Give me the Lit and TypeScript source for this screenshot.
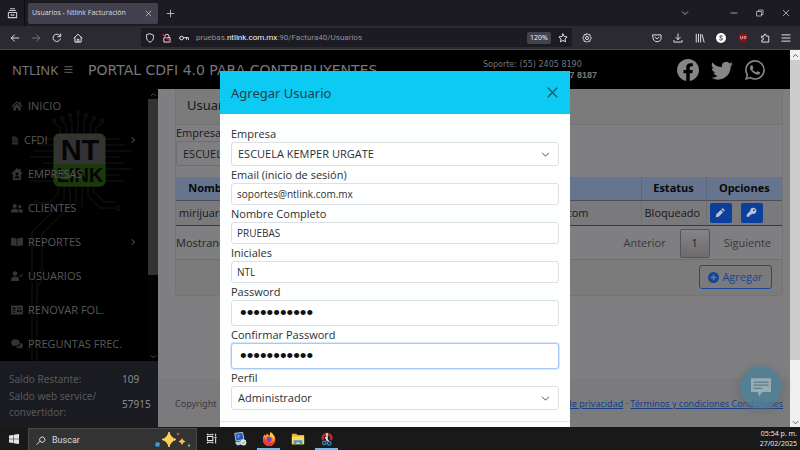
import { LitElement, html, css, svg, nothing } from "lit";
import { customElement, property } from "lit/decorators.js";

const stroke = (d: string, box = 16) =>
  html`<svg viewBox="0 0 ${box} ${box}" fill="none" stroke="currentColor" stroke-width="1.5" stroke-linecap="round" stroke-linejoin="round" aria-hidden="true"><path d=${d}></path></svg>`;
const solid = (d: string, box = "0 0 16 16") =>
  html`<svg viewBox=${box} fill="currentColor" fill-rule="evenodd" aria-hidden="true"><path d=${d}></path></svg>`;

const FACEBOOK = "M16 8.049c0-4.446-3.582-8.05-8-8.05C3.58 0-.002 3.603-.002 8.05c0 4.017 2.926 7.347 6.75 7.951v-5.625h-2.03V8.05H6.75V6.275c0-2.017 1.195-3.131 3.022-3.131.876 0 1.791.157 1.791.157v1.98h-1.009c-.993 0-1.303.621-1.303 1.258v1.51h2.218l-.354 2.326H9.25V16c3.824-.604 6.75-3.934 6.75-7.951z";
const TWITTER = "M5.026 15c6.038 0 9.341-5.003 9.341-9.334 0-.14 0-.282-.006-.422A6.685 6.685 0 0 0 16 3.542a6.658 6.658 0 0 1-1.889.518 3.301 3.301 0 0 0 1.447-1.817 6.533 6.533 0 0 1-2.087.793A3.286 3.286 0 0 0 7.875 6.03a9.325 9.325 0 0 1-6.767-3.429 3.289 3.289 0 0 0 1.018 4.382A3.323 3.323 0 0 1 .64 6.575v.045a3.288 3.288 0 0 0 2.632 3.218 3.203 3.203 0 0 1-.865.115 3.23 3.23 0 0 1-.614-.057 3.283 3.283 0 0 0 3.067 2.277A6.588 6.588 0 0 1 .78 13.58a6.32 6.32 0 0 1-.78-.045A9.344 9.344 0 0 0 5.026 15z";
const WHATSAPP = "M13.601 2.326A7.854 7.854 0 0 0 7.994 0C3.627 0 .068 3.558.064 7.926c0 1.399.366 2.76 1.057 3.965L0 16l4.204-1.102a7.933 7.933 0 0 0 3.79.965h.004c4.368 0 7.926-3.558 7.93-7.93A7.898 7.898 0 0 0 13.6 2.326zM7.994 14.521a6.573 6.573 0 0 1-3.356-.92l-.24-.144-2.494.654.666-2.433-.156-.251a6.56 6.56 0 0 1-1.007-3.505c0-3.626 2.957-6.584 6.591-6.584a6.56 6.56 0 0 1 4.66 1.931 6.557 6.557 0 0 1 1.928 4.66c-.004 3.639-2.961 6.592-6.592 6.592zm3.615-4.934c-.197-.099-1.17-.578-1.353-.646-.182-.065-.315-.099-.445.099-.133.197-.513.646-.627.775-.114.133-.232.148-.43.05-.197-.1-.836-.308-1.592-.985-.59-.525-.985-1.175-1.103-1.372-.114-.198-.011-.304.088-.403.087-.088.197-.232.296-.346.1-.114.133-.198.198-.33.065-.134.034-.248-.015-.347-.05-.099-.445-1.076-.612-1.47-.16-.389-.323-.335-.445-.34-.114-.007-.247-.007-.38-.007a.729.729 0 0 0-.529.247c-.182.198-.691.677-.691 1.654 0 .977.71 1.916.81 2.049.098.133 1.394 2.132 3.383 2.992.47.205.84.326 1.129.418.475.152.904.129 1.246.08.38-.058 1.171-.48 1.338-.943.164-.464.164-.86.114-.943-.049-.084-.182-.133-.38-.232z";

const BACK = "M14 8H2M7 3L2 8l5 5";
const FORWARD = "M2 8h12M9 3l5 5-5 5";
const RELOAD = "M13.5 9.5A6 6 0 1 1 12.5 4M13.8 1.5v4.3H9.5";
const HOUSE = "M1.5 8L8 2l6.500 6M3 7v7.500h10V7M6.500 14.500V10h3v4.500";
const SHIELD = "M8 1.300l5.500 2v4c0 3.400-2.200 6-5.500 7.500C4.700 13.300 2.500 10.700 2.500 7.300v-4z";
const STAR = "M8 1.500l2 4.200 4.600.6-3.400 3.200.9 4.600L8 11.900l-4.100 2.200.9-4.600L1.400 6.300 6 5.700z";
const DOWNLOAD = "M8 1.500v9M4.500 7L8 10.500 11.500 7M1.500 12v2.500h13V12";
const PUZZLE = "M3 5h3.500V3.500a1.700 1.700 0 0 1 3.400 0V5H14v9.500H3V11h1a1.700 1.700 0 0 0 0-3.400H3z";
const POCKET = "M1.500 3h13v4.500a6.500 6.500 0 0 1-13 0zM5 6.500l3 3 3-3";
const CHEVRON_DOWN = "M2.500 5.500L8 11l5.500-5.500";
const CHEVRON_UP = "M3 10.500l5-5 5 5";
const CHEVRON_RIGHT = "M5.500 2.500L11 8l-5.500 5.500";
const CROSS = "M2.500 2.500l11 11M13.500 2.500l-11 11";
const PLUS = "M8 2v12M2 8h12";
const BARS = "M1.500 3h13M1.500 8h13M1.500 13h13";

const menu: { label: string; icon: string; more?: boolean; narrow?: boolean }[] = [
  { label: "INICIO", icon: "M8 1.500L.5 8l1 1.200L8 3.700l6.500 5.500 1-1.200-2.500-2.200V2.500h-1.800v1.800zM8 5L3 9.300V14h3.700v-3.500h2.600V14H13V9.300z" },
  { label: "CFDI", icon: "M2.500 0h7v4.500h4V16h-11zM10.500 0l3 3.500h-3zM5 2.500v1.200h3V2.500zM5 5v1.200h3V5zM5 8v5h6V8zM6.200 9.200h3.600v2.600H6.200z", more: true, narrow: true },
  { label: "EMPRESAS", icon: "M8 0L0 7.500h2.500V16h11V7.500H16l-3-2.800V1h-2v1.800zM8 6a2 2 0 1 1 0 4 2 2 0 0 1 0-4zM4.800 13.500c0-1.500 1-2.500 2.200-2.500h2c1.200 0 2.200 1 2.200 2.500z" },
  { label: "CLIENTES", icon: "M5 2.500a2.700 2.700 0 1 1 0 5.400 2.700 2.700 0 0 1 0-5.400zM11.800 4a2.200 2.200 0 1 1 0 4.400 2.200 2.200 0 0 1 0-4.400zM0 14c0-3 1.500-5 3.500-5h3C8.500 9 10 11 10 14zM11 14c0-1.800-.4-3.300-1.300-4.400h3.300c1.800 0 3 1.600 3 4.400z" },
  { label: "REPORTES", icon: "M0 2.500c3-.5 5.500 0 7.500 1.200V14C5.500 12.900 3 12.500 0 12.800zM16 2.500c-3-.5-5.500 0-7.500 1.200V14c2-1.100 4.500-1.500 7.500-1.200z", more: true },
  { label: "USUARIOS", icon: "M5.500 1.500a3.200 3.200 0 1 1 0 6.400 3.200 3.200 0 0 1 0-6.400zM0 14.500c0-3.500 1.500-5.500 4-5.500h3c2.500 0 4 2 4 5.500zM10.300 7.500l1-1 1.400 1.400L15 5l1 1-3.300 4z" },
  { label: "RENOVAR FOL.", icon: "M0 2h16v12H0zM2 5v1.500h4V5zM2 8v1h4V8zM2 10.500v1h3v-1zM8 5v1h6V5zM8 8v2.500h2.500V8zM11.500 8v2.500H14V8z" },
  { label: "PREGUNTAS FREC.", icon: "M6 1.500c3.200 0 5.800 1.900 5.800 4.400S9.200 10.300 6 10.300c-.8 0-1.500-.1-2.200-.3-1 .7-2.200 1-3.500 1 .6-.6 1.200-1.400 1.400-2.200C.8 8.100.2 7 .2 5.900.2 3.400 2.800 1.500 6 1.500zM13 6.200c1.700.6 2.900 1.900 2.900 3.500 0 1-.5 2-1.300 2.700.2.800.7 1.400 1.200 2-1.200 0-2.300-.4-3.200-1-2.200.5-5.100 0-6.300-1.900 4 .1 6.800-2.200 6.700-5.300z" },
];

@customElement("circuit-logo")
export class CircuitLogo extends LitElement {
  static styles = css`
    :host { display: block; }
    .art { display: block; width: 100%; height: 100%; }
    .mark { font: 700 29px "Liberation Sans", Arial, sans-serif; fill: #050505; }
    .sub { font: 700 20px "Liberation Sans", Arial, sans-serif; fill: #050505; }
  `;
  render() {
    return html`<svg class="art" viewBox="0 0 148 272" preserveAspectRatio="xMinYMin slice" aria-hidden="true">
      <g fill="none" stroke="#0e0e0e" stroke-width="1.500">
        ${[60, 66, 72, 78, 84, 90, 96].map((x, i) => svg`<path d="M${x} 45V${30 + Math.abs(i - 3) * 3}l${(i - 3) * 2}-5"></path><circle cx=${x + (i - 3) * 2} cy=${23 + Math.abs(i - 3) * 3} r="1.500"></circle>`)}
        ${[50, 56, 62, 68, 74, 80, 86, 92].map((y, i) => svg`<path d="M105 ${y}h${14 + (i % 3) * 6}M54 ${y}h-${12 + (i % 4) * 4}"></path>`)}
        <path d="M58 97v8l-9 9H38M64 97v14l-32 32v42l5 8v79M70 97v20l-28 28v36M76 97v16M82 97v22M88 97v10l12 12h16M94 97v6l10 10h12M32 193v79M42 190l-5 10v72"></path>
        <circle cx="36" cy="114" r="2"></circle><circle cx="118" cy="119" r="2"></circle><circle cx="42" cy="183" r="2"></circle>
      </g>
      <path d="M54 75V50a5 5 0 0 1 5-5h41a5 5 0 0 1 5 5v25z" fill="#343234"></path>
      <path d="M54 75v17a5 5 0 0 0 5 5h41a5 5 0 0 0 5-5V75z" fill="#1b380b"></path>
      <rect x="54" y="45" width="51" height="52" rx="5" fill="none" stroke="#234310"></rect>
      <text class="mark" x="80" y="71" text-anchor="middle">NT</text>
      <text class="sub" x="80" y="93" text-anchor="middle">LINK</text>
    </svg>`;
  }
}

@customElement("user-dialog")
export class UserDialog extends LitElement {
  static styles = css`
    :host { display: block; background: #fdfefe; color: #2b3036; font: 11px/17px "Open Sans", "Noto Sans", sans-serif; }
    * { box-sizing: border-box; }
    .head { height: 43px; padding: 0 11px; background: #0dcaf2; display: flex; align-items: center; justify-content: space-between; }
    .title { margin: 0; font: 400 13px/18px "Noto Sans", sans-serif; color: #263c4c; }
    .close { border: 0; background: none; padding: 0; width: 13px; height: 13px; color: #17566b; }
    .close svg { display: block; width: 13px; height: 13px; }
    .body { padding: 11px; }
    .label { display: block; }
    .control { display: block; width: 100%; height: 22px; border: 1px solid #dcdfe6; border-radius: 3px; background: #fff; color: #2b3036; font: 10px/16px "Open Sans", "Noto Sans", sans-serif; padding: 0 5px; outline: 0; }
    .select-box { position: relative; }
    .select-box .control { height: 24px; appearance: none; font-size: 11px; padding: 0 6px; }
    .select-box svg { position: absolute; right: 9px; top: 8px; width: 9px; height: 9px; pointer-events: none; }
    .secret { height: 26px; padding: 0 8px; font: 19px/24px "Liberation Sans", Arial, sans-serif; color: #111; }
    .focused { border-color: #a9c8f5; box-shadow: 0 0 0 1px #dbe8fb; }
    .foot { border-top: 1px solid #e3e6e8; height: 40px; }
  `;

  private text(id: string, label: string, value: string) {
    return html`<label class="label" for=${id}>${label}</label><input class="control" id=${id} type="text" .value=${value}>`;
  }
  private secret(id: string, label: string, focused = false) {
    return html`<label class="label" for=${id}>${label}</label>
      <input class="control secret ${focused ? "focused" : ""}" id=${id} type="password" .value=${"contrasena1"}>`;
  }
  private choice(id: string, label: string, value: string) {
    return html`<label class="label" for=${id}>${label}</label>
      <div class="select-box"><select class="control" id=${id}><option>${value}</option></select>${stroke(CHEVRON_DOWN)}</div>`;
  }

  render() {
    return html`
      <header class="head"><h2 class="title">Agregar Usuario</h2><button class="close" aria-label="Cerrar">${stroke(CROSS)}</button></header>
      <form class="body">
        ${this.choice("empresa", "Empresa", "ESCUELA KEMPER URGATE")}
        ${this.text("email", "Email (inicio de sesión)", "soportes@ntlink.com.mx")}
        ${this.text("nombre", "Nombre Completo", "PRUEBAS")}
        ${this.text("iniciales", "Iniciales", "NTL")}
        ${this.secret("password", "Password")}
        ${this.secret("confirmar", "Confirmar Password", true)}
        ${this.choice("perfil", "Perfil", "Administrador")}
      </form>
      <div class="foot"></div>`;
  }
}

@customElement("scroll-rail")
export class ScrollRail extends LitElement {
  @property({ type: Number }) size = 80;
  static styles = css`
    :host { display: flex; flex-direction: column; width: 10px; flex: none; background: var(--track); color: var(--arrow); }
    .cap { height: 10px; flex: none; display: grid; place-items: center; }
    .cap svg { width: 7px; height: 7px; stroke-width: 2; }
    .lane { flex: 1; }
    .thumb { background: var(--thumb); }
  `;
  render() {
    return html`<div class="cap">${stroke(CHEVRON_UP)}</div>
      <div class="lane"><div class="thumb" style="height:${this.size}%"></div></div>
      <div class="cap">${stroke(CHEVRON_DOWN)}</div>`;
  }
}

@customElement("app-root")
export class AppRoot extends LitElement {
  static styles = css`
    :host { display: flex; flex-direction: column; height: 100vh; overflow: hidden; font: 11px/16px "Open Sans", "Noto Sans", sans-serif; }
    * { box-sizing: border-box; }
    button { border: 0; background: none; padding: 0; margin: 0; font: inherit; color: inherit; }
    svg { display: block; flex: none; }

    .tabs { flex: none; height: 26px; background: #1c1b22; color: #c9c9d0; display: flex; align-items: center; }
    .tabs svg { width: 9px; height: 9px; }
    .view { width: 25px; height: 26px; display: grid; place-items: center; border-right: 1px solid #0c0c10; }
    .view svg { width: 11px; height: 11px; }
    .tab { width: 130px; height: 21px; margin-left: 3px; padding: 0 6px 0 4px; border-radius: 2px; background: #42414d; display: flex; align-items: center; justify-content: space-between; font: 7px/12px "Open Sans", sans-serif; color: #dcdce2; white-space: nowrap; }
    .tab svg { width: 7px; height: 7px; }
    .new { margin-left: 8px; }
    .window { margin-left: auto; display: flex; align-items: center; padding-right: 1px; }
    .window button { width: 26px; height: 26px; display: grid; place-items: center; }
    .window .list { margin-right: 23px; }
    .window svg { width: 8px; height: 8px; }

    .tools { flex: none; height: 24px; background: #2b2a33; color: #e8e8ee; display: flex; align-items: center; padding: 0 3px 0 4px; border-bottom: 1px solid #45444e; }
    .tools svg { width: 10px; height: 10px; }
    .tool { width: 21px; height: 20px; display: grid; place-items: center; }
    .tool[disabled] { color: #77767f; }
    .url { flex: 1; margin: 0 4px 0 53px; height: 19px; border-radius: 2px; background: #1c1b22; display: flex; align-items: center; gap: 7px; padding: 0 4px; font: 8px/12px Roboto, sans-serif; color: #8f8f98; }
    .url > svg { color: #e8e8ee; }
    .url .host { color: #f4f4f8; }
    .url .zoom { margin-left: auto; height: 12px; width: 24px; border-radius: 2px; background: #42414d; color: #eee; font: 7px/12px "Noto Sans", sans-serif; text-align: center; }
    .extras { margin-left: 49px; display: grid; grid-template-columns: repeat(7, 1fr); width: 151px; }
    .extras button { display: grid; place-items: center; }

    .page { flex: 1; min-height: 0; position: relative; display: flex; background: #7f7f81; }
    .document { flex: 1; min-width: 0; display: flex; flex-direction: column; }
    .outer { --track: #f0f0f0; --thumb: #cdcdcd; --arrow: #505050; }

    .top { flex: none; height: 39px; background: #000; color: #77777a; display: flex; align-items: center; padding: 0 25px 0 12px; }
    .brand { width: 76px; display: flex; align-items: center; gap: 6px; font: 13px/18px "Noto Sans", sans-serif; }
    .brand svg { width: 9px; height: 9px; }
    .portal { margin: 0; font: 14px/16px "DejaVu Sans", Verdana, sans-serif; white-space: nowrap; }
    .support { margin-left: auto; width: 114px; font: 8px/11px "DejaVu Sans", Verdana, sans-serif; white-space: nowrap; }
    .support .second { text-align: right; font: 700 9px/11px "Liberation Sans", Arial, sans-serif; }
    .social { display: flex; align-items: center; gap: 12px; margin-left: 80px; color: #858585; }
    .social svg { width: 22px; height: 22px; }
    .social .wa svg { width: 20px; height: 20px; }

    .main { flex: 1; min-height: 0; display: flex; }
    .side { flex: none; width: 158px; background: #000; display: flex; flex-direction: column; color: #58585a; }
    .scroller { flex: 1; min-height: 0; display: flex; position: relative; --track: #020202; --thumb: #333; --arrow: #555; }
    .logo { position: absolute; inset: 0 10px 0 0; }
    .menu { position: relative; flex: 1; display: grid; grid-auto-rows: 1fr; padding: 0 11px; }
    .item { display: flex; align-items: center; gap: 5px; color: inherit; text-decoration: none; }
    .item svg { width: 12px; height: 12px; color: #343436; }
    .item .narrow svg { width: 8px; height: 11px; }
    .item .more { margin-left: auto; width: 8px; height: 8px; color: #666; stroke-width: 2; }
    .balance { flex: none; height: 66px; margin: 0; padding: 9px 9px 7px; background: #1a1b20; display: grid; grid-template-columns: 113px 1fr; align-items: center; font: 10px/16px "Noto Sans", sans-serif; }
    .balance dd { margin: 0; color: #8a8a8d; }

    .content { flex: 1; min-width: 0; display: flex; flex-direction: column; color: #17181a; }
    .card { margin: 0 7px 0 17px; border: 1px solid #747475; border-top: 0; border-radius: 0 0 3px 3px; }
    .card-head { height: 36px; border-bottom: 1px solid #737374; background: #7b7b7b; padding: 8px 11px; font: 400 13px/16px "Noto Sans", sans-serif; margin: 0; }
    .card-label { display: block; }
    .company { appearance: none; display: block; width: 300px; height: 25px; border: 1px solid #6e6e70; border-radius: 3px; background: #7f7f81; color: #1c1d20; font: inherit; padding: 0 6px; margin-bottom: 11px; }
    .grid { width: 100%; border-collapse: collapse; table-layout: fixed; }
    .grid th { height: 23px; padding: 0; background: #66758d; border-right: 1px solid #5a677c; border-bottom: 1px solid #4a4f5c; color: #08090b; text-align: center; }
    .grid td { height: 25px; padding: 0 3px; border-right: 1px solid #707072; border-bottom: 1px solid #3a3a3c; background: #7a7a7c; white-space: nowrap; }
    .grid th:last-child, .grid td:last-child { border-right: 0; }
    .c-name { width: 70px; }
    .c-mail { width: 142px; }
    .c-state { width: 65px; }
    .c-opts { width: 76px; }
    .grid .mail { text-align: right; padding-right: 52px; }
    .opts { display: flex; gap: 9px; }
    .opt { width: 22px; height: 20px; border-radius: 2px; background: #0b3f9b; color: #b9c3d4; display: grid; place-items: center; }
    .opt svg { width: 11px; height: 11px; }
    .pager { height: 33px; padding-top: 2px; display: flex; align-items: center; color: #232326; }
    .pager .prev { margin-left: auto; color: #38383b; }
    .pager .current { width: 30px; height: 29px; margin: 0 14px; border: 1px solid #555; border-radius: 2px; background: linear-gradient(#858587, #6c6c6e); }
    .pager .next { margin-right: 11px; color: #38383b; }
    .card-foot { height: 36px; border-top: 1px solid #6f6f71; background: #7b7b7b; display: flex; justify-content: flex-end; align-items: center; padding: 0 10px; }
    .add { height: 24px; width: 73px; border: 1px solid #164a9c; border-radius: 3px; color: #14479a; display: flex; align-items: center; justify-content: center; gap: 3px; }
    .add svg { width: 11px; height: 11px; }
    .legal { margin-top: auto; height: 49px; background: #7b7b7d; display: flex; align-items: center; justify-content: space-between; padding: 2px 7px 0 17px; font: 9px/16px "Noto Sans", sans-serif; color: #39393c; white-space: nowrap; }
    .legal a { color: #153f86; }

    .chat { position: absolute; right: 18px; bottom: 19px; width: 42px; height: 42px; border-radius: 50%; background: #4c8099; color: #a3b8c2; display: grid; place-items: center; box-shadow: 0 2px 8px #66666a; opacity: 0.800; }
    .chat svg { width: 20px; height: 20px; }
    .layer { position: absolute; inset: 0 10px 0 0; overflow: hidden; display: flex; justify-content: center; align-items: flex-start; padding-top: 21px; }
    .dialog { width: 350px; }

    .taskbar { flex: none; height: 23px; background: #191919; color: #e6e6e6; display: flex; align-items: center; }
    .task { position: relative; width: 29px; height: 23px; display: grid; place-items: center; }
    .task svg { width: 14px; height: 14px; }
    .task.start svg { width: 10px; height: 10px; }
    .task.start { width: 28px; }
    .task.plain { width: 28px; }
    .task.plain svg { width: 11px; height: 11px; }
    .task.open { box-shadow: inset 0 -2px 0 #76b9ed; width: 23px; margin: 0 3px; }
    .search { width: 169px; height: 22px; background: #333; display: flex; align-items: center; gap: 6px; padding: 0 5px 0 7px; border: 1px solid #4a4a4a; border-bottom: 0; align-self: flex-end; }
    .search svg { width: 10px; height: 10px; }
    .search .sparks { width: 36px; height: 16px; margin-left: auto; }
    .search input { width: 80px; border: 0; outline: 0; background: none; font: 9px/14px Roboto, sans-serif; color: #ddd; padding: 0; }
    .search input::placeholder { color: #dcdcdc; }
    .clock { margin-left: auto; padding-right: 3px; text-align: right; font: 7px/10px "Noto Sans", sans-serif; }
  `;

  private tabs() {
    return html`<div class="tabs">
      <button class="view" aria-label="Vista">${stroke("M2 6.500h12v7.500H2zM3.500 3.500h9M5 1h6M6 9v1.500h4V9")}</button>
      <div class="tab"><span>Usuarios - Ntlink Facturación</span><button aria-label="Cerrar pestaña">${stroke(CROSS)}</button></div>
      <button class="new" aria-label="Nueva pestaña">${stroke(PLUS)}</button>
      <div class="window">
        <button class="list" aria-label="Pestañas">${stroke(CHEVRON_DOWN)}</button>
        <button aria-label="Minimizar">${stroke("M2 8h12")}</button>
        <button aria-label="Restaurar">${stroke("M2 5h9v9H2zM5 5V2h9v9h-3")}</button>
        <button aria-label="Cerrar">${stroke(CROSS)}</button>
      </div>
    </div>`;
  }

  private tools() {
    return html`<div class="tools">
      <button class="tool" aria-label="Atrás">${stroke(BACK)}</button>
      <button class="tool" aria-label="Adelante" disabled>${stroke(FORWARD)}</button>
      <button class="tool" aria-label="Recargar">${stroke(RELOAD)}</button>
      <button class="tool" aria-label="Inicio">${stroke(HOUSE)}</button>
      <div class="url">
        ${stroke(SHIELD)}
        <svg viewBox="0 0 16 16" fill="none" stroke="currentColor" stroke-width="1.500"><path d="M3 7.500h10v7H3zM5 7.500V5a3 3 0 0 1 6 0v2.500"></path><path d="M1 2l14 13" stroke="#e2284b" stroke-width="2"></path></svg>
        ${stroke("M1 8a3 3 0 1 0 6 0 3 3 0 1 0-6 0M7 7.500h8v3M12 7.500v2.500")}
        <span>pruebas.<span class="host">ntlink.com.mx</span>:90/Factura40/Usuarios</span>
        <button class="zoom">120%</button>
        ${stroke(STAR)}
      </div>
      <button class="tool" aria-label="Ajustes">${stroke("M8 1l1.800 1.800L12.500 2.500l.5 2.700L15 8l-2 2.800-.5 2.700-2.700-.3L8 15l-1.800-1.800-2.700.3-.5-2.700L1 8l2-2.800.5-2.700 2.700.3zM8 5.500a2.500 2.500 0 1 0 0 5 2.500 2.500 0 1 0 0-5")}</button>
      <div class="extras">
        <button aria-label="Pocket">${stroke(POCKET)}</button>
        <button aria-label="Descargas">${stroke(DOWNLOAD)}</button>
        <button aria-label="Biblioteca">${stroke("M2 2v12.500M5.500 2v12.500M9 2v12.500M11.500 3l3 11.500")}</button>
        <button aria-label="Extensión"><svg viewBox="0 0 16 16"><circle cx="8" cy="8" r="8" fill="#fff"></circle><path d="M10.500 5.300C9 4 5.800 4.300 6 6.300c.2 1.800 4.300 1.400 4.300 3.400 0 1.900-3.300 2.200-4.900.8" fill="none" stroke="#222" stroke-width="1.600"></path></svg></button>
        <button aria-label="Bloqueador"><svg viewBox="0 0 16 16"><path d="M8 0l7 2.500v4.500c0 4-2.500 7-7 9-4.500-2-7-5-7-9V2.500z" fill="#8a1017"></path><path d="M4 5v3c0 2 3 2 3 0V5M9.500 5.500h3v3h-3z" fill="none" stroke="#e9c9ca" stroke-width="1.200"></path></svg></button>
        <button aria-label="Extensiones">${stroke(PUZZLE)}</button>
        <button aria-label="Menú">${stroke(BARS)}</button>
      </div>
    </div>`;
  }

  private side() {
    return html`<aside class="side">
      <div class="scroller">
        <circuit-logo class="logo"></circuit-logo>
        <nav class="menu">
          ${menu.map((m) => html`<a class="item" href="#"><span class=${m.narrow ? "narrow" : "wide"}>${solid(m.icon)}</span><span>${m.label}</span>${m.more
            ? html`<svg class="more" viewBox="0 0 16 16" fill="none" stroke="currentColor"><path d=${CHEVRON_RIGHT}></path></svg>`
            : nothing}</a>`)}
        </nav>
        <scroll-rail .size=${70}></scroll-rail>
      </div>
      <dl class="balance">
        <dt>Saldo Restante:</dt><dd>109</dd>
        <dt>Saldo web service/ convertidor:</dt><dd>57915</dd>
      </dl>
    </aside>`;
  }

  private content() {
    return html`<main class="content">
      <section class="card">
        <h1 class="card-head">Usuarios</h1>
        <label class="card-label" for="company">Empresa</label>
        <select class="company" id="company"><option>ESCUELA KEMPER URGATE</option></select>
        <table class="grid">
          <colgroup><col class="c-name"><col><col class="c-mail"><col class="c-state"><col class="c-opts"></colgroup>
          <thead><tr><th>Nombre</th><th></th><th></th><th>Estatus</th><th>Opciones</th></tr></thead>
          <tbody><tr>
            <td>mirijuarez</td><td></td><td class="mail">.com</td><td>Bloqueado</td>
            <td><div class="opts">
              <button class="opt" aria-label="Editar">${solid("M11 1.500l3.500 3.500-1.700 1.700-3.500-3.500zM8.300 4.200l3.500 3.500-6.500 6.500L1 15l.8-4.300z")}</button>
              <button class="opt" aria-label="Contraseña">${solid("M10.500 1a4.500 4.500 0 1 1-1.200 8.800L8 11H6.500v1.500H5V14H1v-3l5.200-5.200A4.500 4.500 0 0 1 10.500 1zM11.500 3.300a1.300 1.300 0 1 0 0 2.600 1.300 1.300 0 0 0 0-2.600z")}</button>
            </div></td>
          </tr></tbody>
        </table>
        <div class="pager"><span>Mostrando</span>
          <button class="prev">Anterior</button><button class="current">1</button><button class="next">Siguiente</button></div>
        <div class="card-foot"><button class="add">${solid("M8 0a8 8 0 1 0 0 16A8 8 0 0 0 8 0zM7 4h2v3h3v2H9v3H7V9H4V7h3z")}Agregar</button></div>
      </section>
      <footer class="legal"><span>Copyright</span>
        <span><a href="#">Política de privacidad</a> · <a href="#">Términos y condiciones Condiciones</a></span></footer>
    </main>`;
  }

  private taskbar() {
    return html`<div class="taskbar">
      <button class="task start" aria-label="Inicio">${solid("M0 2.300l6.500-.9v6.100H0zM7.300 1.300L16 0v7.500H7.300zM0 8.300h6.500v6.100L0 13.500zM7.300 8.300H16V16l-8.700-1.300z")}</button>
      <div class="search">
        ${stroke("M6.500 10a4 4 0 1 0 7-5 4 4 0 1 0-7 5M6.500 10L1.500 15")}
        <input type="text" placeholder="Buscar" aria-label="Buscar">
        <svg class="sparks" viewBox="0 0 36 16"><path d="M14 0q1.500 6 7 7.500-5.500 1.500-7 7.500-1.500-6-7-7.500Q12.500 6 14 0z" fill="#ffd057" stroke="#ffd057"></path><path d="M27 6q.8 3 3.500 3.500-2.700.7-3.500 3.500-.8-2.800-3.500-3.500Q26.200 9 27 6z" fill="#f6c04a"></path><path d="M1 10l4 1-1 4-4-1z" fill="#3f9be0"></path><circle cx="23" cy="2" r="1.300" fill="#c4571f"></circle><circle cx="34" cy="13.500" r="1.200" fill="#6fae6a"></circle></svg>
      </div>
      <button class="task plain" aria-label="Vista de tareas">${stroke("M2 5h8v6H2zM2 1.500v1h8v-1M2 14.500v-1h8v1M14 1.500v3M14 8v6.500M13 6.500h2")}</button>
      <button class="task" aria-label="Escritorio remoto"><svg viewBox="0 0 16 16"><path d="M2 1.500l9-1 1.500 8-9 2z" fill="#1d56b8" stroke="#c8d8ec"></path><path d="M4 3l5 0-3 5z" fill="#4d90ea"></path><path d="M2 12l9-2 3 3-9 2.500z" fill="#c3cdd8"></path><circle cx="12" cy="12" r="3.300" fill="#e4e9e6"></circle><path d="M10.500 12l1.200 1.200 2-2.400" stroke="#56805e" fill="none"></path></svg></button>
      <button class="task open" aria-label="Firefox"><svg viewBox="0 0 16 16"><path d="M1 8c0-2.500 1-4 2-5.500.3 1 .6 1.300 1 1.500C5 2.500 6 2 7 2c0 1 .5 2 1.500 2.500C9.500 3 9.500 1 9.500 0c3 2 3 3 3.500 4 .5 0 1 .2 1.500.8C16.500 11 13.500 16 8 16c-4 0-7-3.500-7-8z" fill="#ff8b24"></path><path d="M1 8c0 5 3.500 8 7 8s7-3 7.200-7.500C13 13 4 14 3 6.500z" fill="#f0343f"></path><circle cx="8" cy="8.500" r="3" fill="#7042c9"></circle><path d="M9.500 0c3.500 2 5 5 4.500 9-1-3-3-4-5.500-4.500C9.500 3 9.500 1 9.500 0z" fill="#ffd43b"></path></svg></button>
      <button class="task" aria-label="Explorador"><svg viewBox="0 0 16 16"><path d="M1 2h5l1.500 1.500H15V14H1z" fill="#eab02c"></path><path d="M1 5h14v9H1z" fill="#ffd95e"></path><path d="M3 14V9.500h10V14h-3v-2H6v2z" fill="#3d9bdc"></path></svg></button>
      <button class="task open" aria-label="Recortes"><svg viewBox="0 0 16 16" fill="none"><path d="M4 9a5 4 0 1 1 8 0" stroke="#b92b31" stroke-width="3"></path><path d="M8 1v9M6 6l4 5" stroke="#e4e4e4" stroke-width="1.800"></path><circle cx="5" cy="12.500" r="2" stroke="#2d8bcf" stroke-width="1.500"></circle><circle cx="10.500" cy="13" r="2" stroke="#2d8bcf" stroke-width="1.500"></circle></svg></button>
      <div class="clock"><div>05:54 p. m.</div><div>27/02/2025</div></div>
    </div>`;
  }

  render() {
    return html`${this.tabs()}${this.tools()}
      <div class="page">
        <div class="document">
          <header class="top">
            <div class="brand"><span>NTLINK</span>${stroke(BARS)}</div>
            <p class="portal">PORTAL CDFI 4.0 PARA CONTRIBUYENTES</p>
            <div class="support"><div>Soporte: (55) 2405 8190</div><div class="second">7 8187</div></div>
            <div class="social">
              <a aria-label="Facebook">${solid(FACEBOOK)}</a><a aria-label="Twitter">${solid(TWITTER)}</a><a class="wa" aria-label="WhatsApp">${solid(WHATSAPP)}</a>
            </div>
          </header>
          <div class="main">${this.side()}${this.content()}</div>
        </div>
        <scroll-rail class="outer" .size=${84}></scroll-rail>
        <button class="chat" aria-label="Chat">${solid("M0 1h16v11H9l-2.500 3.500L5.500 12H0zM2 3.500v1h12v-1zM2 6v1h12V6zM2 8.500v1h7v-1z")}</button>
        <div class="layer"><user-dialog class="dialog" role="dialog" aria-label="Agregar Usuario"></user-dialog></div>
      </div>
      ${this.taskbar()}`;
  }
}
